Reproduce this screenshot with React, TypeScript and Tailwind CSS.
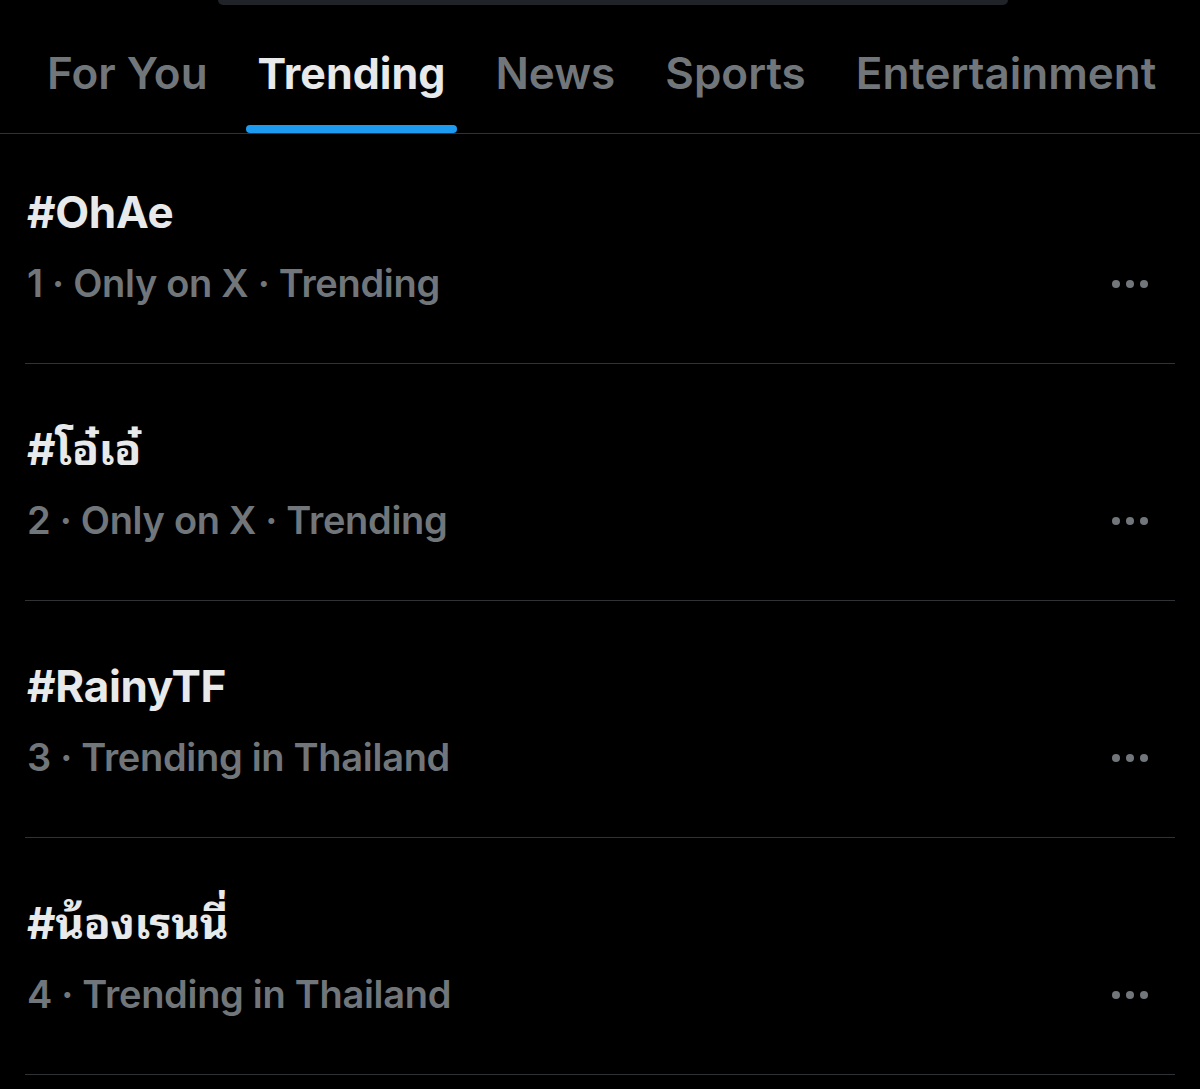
const tabs = ["For You", "Trending", "News", "Sports", "Entertainment"];

const trends = [
  { title: "#OhAe", meta: "1 · Only on X · Trending" },
  { title: "#โอ๋เอ๋", meta: "2 · Only on X · Trending" },
  { title: "#RainyTF", meta: "3 · Trending in Thailand" },
  { title: "#น้องเรนนี่", meta: "4 · Trending in Thailand" },
];

const MoreDots = () => (
  <svg width="36" height="10" viewBox="0 0 36 10" className="text-[#71767b]">
    <circle cx="4" cy="5" r="4" fill="currentColor" />
    <circle cx="18" cy="5" r="4" fill="currentColor" />
    <circle cx="32" cy="5" r="4" fill="currentColor" />
  </svg>
);

const App = () => {
  return (
    <div
      className="min-h-screen w-[1200px] h-[1089px] overflow-hidden bg-black"
      style={{
        fontFamily:
          'Inter, "Noto Sans Thai Looped", "Noto Looped Thai", "Noto Sans Thai", "Noto Sans", sans-serif',
      }}
    >
      {/* search bar edge peeking in at the top */}
      <div className="flex justify-center">
        <div className="ml-[26px] w-[790px] h-[5px] rounded-b-full bg-[#202327]" />
      </div>

      <nav className="flex pl-[35px] pt-[42px] border-b border-[#2f3336]">
        {tabs.map((t, i) => {
          const active = t === "Trending";
          return (
            <div key={t} className={"flex flex-col items-stretch " + (i > 0 ? "ml-[26px]" : "")}>
              <span
                className={
                  "px-3 leading-[52px] " +
                  (active
                    ? "text-[43px] font-bold text-[#e7e9ea]"
                    : "text-[44px] font-semibold text-[#71767b]")
                }
              >
                {t}
              </span>
              <div
                className={
                  "mt-[26px] h-[8px] rounded-full " + (active ? "bg-[#1d9bf0]" : "bg-transparent")
                }
              />
            </div>
          );
        })}
      </nav>

      <div className="px-[25px]">
        {trends.map((tr) => (
          <div
            key={tr.title}
            className="flex flex-col justify-end pb-[57px] border-b border-[#2f3336] h-[237px] first:h-[230px]"
          >
            <div className="pl-[2px] text-[44px] leading-[52px] font-bold text-[#e7e9ea] tracking-[-0.3px]">
              {tr.title}
            </div>
            <div className="mt-[22px] flex items-center justify-between">
              <div className="pl-[2px] text-[38px] leading-[46px] font-semibold text-[#71767b] tracking-[-0.3px]">
                {tr.meta}
              </div>
              <div className="mr-[27px] mt-[2px]">
                <MoreDots />
              </div>
            </div>
          </div>
        ))}
      </div>
    </div>
  );
};

export default App;
